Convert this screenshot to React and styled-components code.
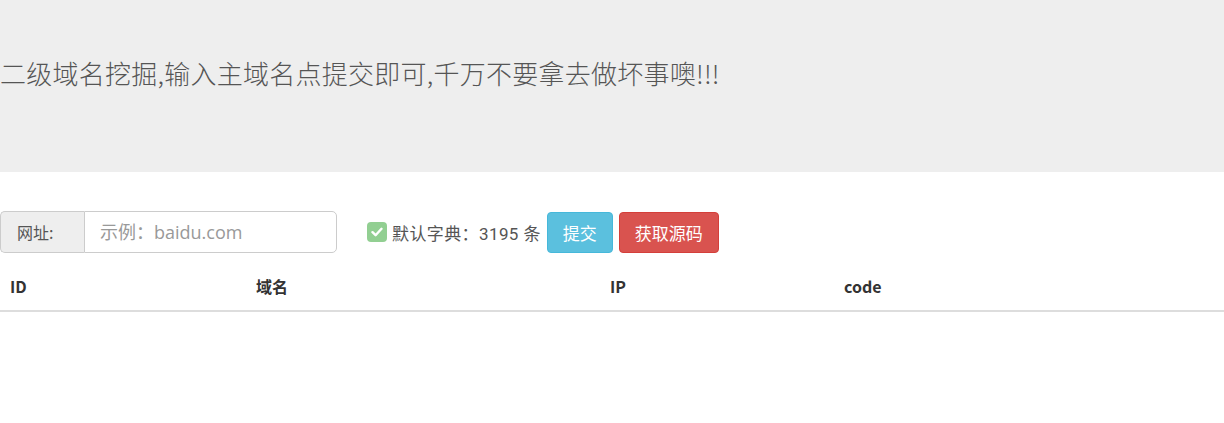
import React from "react";
import styled, { createGlobalStyle } from "styled-components";

const Global = createGlobalStyle`
  html, body { margin: 0; padding: 0; background: #fff; }
  body {
    font-family: "Noto Sans CJK SC", "Open Sans", "Liberation Sans", sans-serif;
    color: #333;
  }
`;

const Banner = styled.header`
  background: #eeeeee;
  height: 172px;
  display: flex;
  align-items: center;
  padding-bottom: 28px;
  box-sizing: border-box;
`;

const Title = styled.h1`
  margin: 0;
  font-size: 26px;
  font-weight: 300;
  color: #555;
  letter-spacing: 0.25px;
  white-space: nowrap;
`;

const Toolbar = styled.form`
  display: flex;
  align-items: center;
  margin-top: 39px;
  height: 42px;
`;

const InputGroup = styled.div`
  display: flex;
  width: 337px;
  height: 42px;
  box-sizing: border-box;
`;

const Addon = styled.span`
  display: flex;
  align-items: center;
  width: 84px;
  padding-left: 16px;
  box-sizing: border-box;
  background: #eee;
  border: 1px solid #ccc;
  border-right: none;
  border-radius: 5px 0 0 5px;
  font-size: 16px;
  color: #555;
`;

const Field = styled.input`
  flex: 1;
  min-width: 0;
  border: 1px solid #ccc;
  border-radius: 0 5px 5px 0;
  padding: 0 15px;
  font-family: "Open Sans", "Noto Sans CJK SC", sans-serif;
  font-size: 18px;
  color: #555;
  outline: none;
  &::placeholder { color: #999; }
`;

const Dict = styled.label`
  display: flex;
  align-items: center;
  margin-left: 30px;
  font-family: "Roboto", "Noto Sans CJK SC", sans-serif;
  font-size: 17px;
  letter-spacing: 0.4px;
  color: #555;
  gap: 5px;
`;

const Check = styled.span`
  width: 20px;
  height: 20px;
  border-radius: 4px;
  background: #92cf92;
  display: flex;
  align-items: center;
  justify-content: center;
`;

const Button = styled.button`
  height: 41px;
  padding: 0 15px;
  border: 1px solid ${(p) => p.$border};
  background: ${(p) => p.$bg};
  color: #fff;
  border-radius: 4px;
  font-family: "Noto Sans CJK SC", sans-serif;
  font-size: 17px;
  margin-left: ${(p) => p.$ml}px;
  cursor: pointer;
`;

const Table = styled.table`
  width: 100%;
  table-layout: fixed;
  border-collapse: collapse;
  margin-top: 10px;
`;

const Th = styled.th`
  box-sizing: border-box;
  text-align: left;
  font-weight: 700;
  font-size: 16px;
  color: #333;
  padding: 11px 10px 12px;
  border-bottom: 2px solid #ddd;
  width: ${(p) => p.$w || "auto"};
`;

export default function App() {
  return (
    <>
      <Global />
      <Banner>
        <Title>二级域名挖掘,输入主域名点提交即可,千万不要拿去做坏事噢!!!</Title>
      </Banner>
      <Toolbar onSubmit={(e) => e.preventDefault()}>
        <InputGroup>
          <Addon>网址:</Addon>
          <Field placeholder="示例：baidu.com" />
        </InputGroup>
        <Dict>
          <Check>
            <svg width="12" height="10" viewBox="0 0 12 10">
              <path d="M1.5 5.2 L4.6 8.2 L10.5 1.8" fill="none" stroke="#fff" strokeWidth="2.4" strokeLinecap="round" strokeLinejoin="round" />
            </svg>
          </Check>
          默认字典：3195 条
        </Dict>
        <Button $bg="#5bc0de" $border="#46b8da" $ml={6}>提交</Button>
        <Button $bg="#d9534f" $border="#d43f3a" $ml={6}>获取源码</Button>
      </Toolbar>
      <Table>
        <thead>
          <tr>
            <Th $w="246px">ID</Th>
            <Th $w="354px">域名</Th>
            <Th $w="234px">IP</Th>
            <Th>code</Th>
          </tr>
        </thead>
      </Table>
    </>
  );
}
